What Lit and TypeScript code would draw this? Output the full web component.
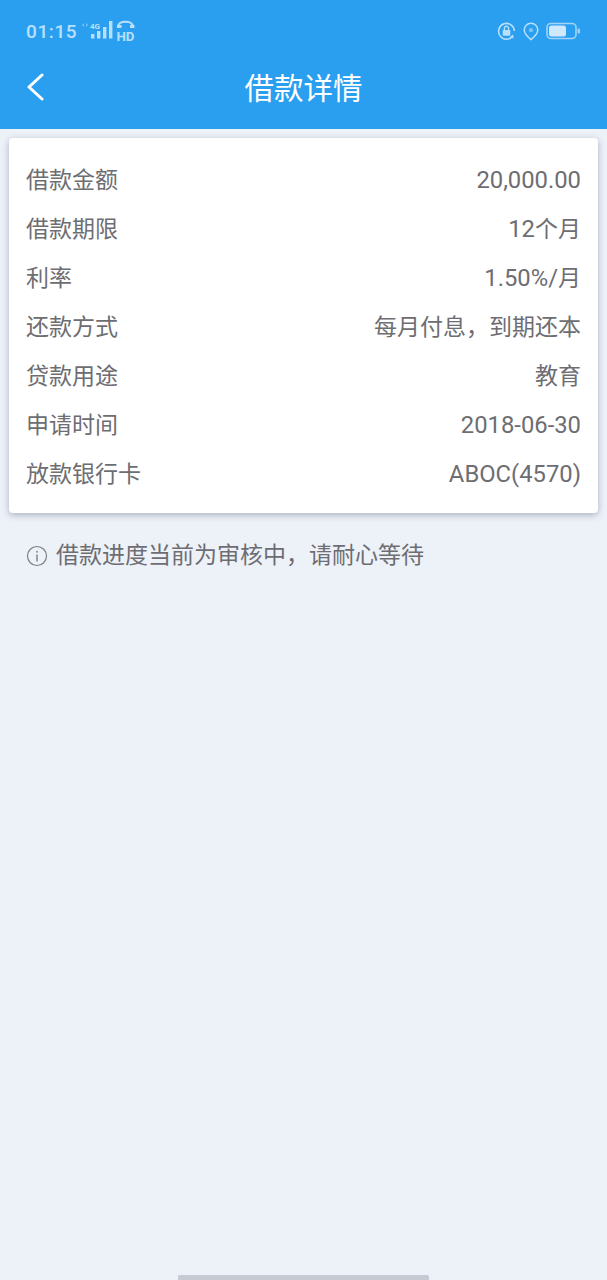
import { LitElement, html, css, svg } from "lit";
import { customElement } from "lit/decorators.js";

const ROWS: [string, string][] = [
  ["借款金额", "20,000.00"],
  ["借款期限", "12个月"],
  ["利率", "1.50%/月"],
  ["还款方式", "每月付息，到期还本"],
  ["贷款用途", "教育"],
  ["申请时间", "2018-06-30"],
  ["放款银行卡", "ABOC(4570)"],
];

@customElement("app-root")
export class AppRoot extends LitElement {
  static styles = css`
    :host {
      display: flex;
      flex-direction: column;
      width: 607px;
      height: 1280px;
      background: #edf2f9;
      font-family: Roboto, "Noto Sans CJK SC", sans-serif;
      color: #6d6d72;
      overflow: hidden;
    }
    .top {
      background: #2a9ff0;
      height: 129px;
      flex: none;
      display: flex;
      flex-direction: column;
      box-sizing: border-box;
    }
    .status {
      height: 62px;
      flex: none;
      display: flex;
      align-items: center;
      padding: 0 26px;
      color: #b9e0fb;
      justify-content: space-between;
    }
    .status-left, .status-right {
      display: flex;
      align-items: center;
    }
    .time {
      font-size: 19px;
      letter-spacing: 0.6px;
      font-weight: 500;
      margin-right: 3px;
    }
    .status-right { gap: 7px; }
    .nav {
      flex: 1;
      display: flex;
      align-items: center;
      justify-content: center;
      position: relative;
      padding-bottom: 12px;
    }
    .back {
      position: absolute;
      left: 26px;
      top: 11px;
    }
    .title {
      font-size: 29.5px;
      color: #fff;
      line-height: 1;
    }
    .body { flex: 1; display: flex; flex-direction: column; padding: 9px 9px 0; }
    .card {
      background: #fff;
      border-radius: 4px;
      box-shadow: 0 2px 7px rgba(90, 100, 120, 0.45);
      padding: 18px 17px 14px;
      display: flex;
      flex-direction: column;
    }
    .row {
      height: 49px;
      flex: none;
      display: flex;
      justify-content: space-between;
      align-items: center;
      font-size: 23px;
      line-height: 30px;
    }
    .num { font-size: 23.8px; }
    .note {
      display: flex;
      align-items: center;
      gap: 8px;
      padding: 28px 0 0 17px;
      font-size: 23px;
      line-height: 30px;
    }
    .spacer { flex: 1; }
    .home {
      width: 251px;
      height: 5px;
      border-radius: 2px 2px 0 0;
      background: #c5cad3;
      align-self: center;
      flex: none;
    }
    svg { display: block; }
  `;

  private value(v: string) {
    return v.split(/([\u4e00-\u9fff，]+)/).map((part) =>
      /[\u4e00-\u9fff，]/.test(part) ? part : html`<span class="num">${part}</span>`
    );
  }

  private statusLeft() {
    return html`<svg width="56" height="24" viewBox="0 0 56 24" fill="none">
      <path d="M2 6l2-2v4zM8 6L6 4v4z" fill="#7fc3f4"/>
      <text x="10" y="9.500" font-size="8" font-weight="700" font-family="Roboto, sans-serif" fill="#b9e0fb">4G</text>
      <rect x="11" y="15" width="3.400" height="4.500" fill="#b9e0fb"/>
      <rect x="17" y="12" width="3.400" height="7.500" fill="#b9e0fb"/>
      <rect x="23" y="8" width="3.400" height="11.500" fill="#b9e0fb"/>
      <rect x="29" y="2" width="3.400" height="17.500" fill="#b9e0fb"/>
      <path d="M38 7.500c0-6.500 15-6.500 15 0" stroke="#b9e0fb" stroke-width="2"/>
      <rect x="37" y="6" width="4.500" height="3" fill="#b9e0fb"/>
      <rect x="50" y="6" width="4.500" height="3" fill="#b9e0fb"/>
      <text x="36.500" y="21.500" font-size="13.500" font-weight="700" font-family="Roboto, sans-serif" fill="#b9e0fb" textLength="18" lengthAdjust="spacingAndGlyphs">HD</text>
    </svg>`;
  }

  private statusRight() {
    return html`
      <svg width="19" height="20" viewBox="0 0 20 20" fill="none">
        ${svg`<path d="M16.500 15.500A8.300 8.300 0 1 1 18.300 10" stroke="#b9e0fb" stroke-width="1.600"/>
        <path d="M13.500 16.200l4 1.600-.6-4" fill="#b9e0fb"/>
        <rect x="6" y="9" width="8" height="6" rx="1" fill="#b9e0fb"/>
        <path d="M7.800 9V7.200a2.200 2.200 0 0 1 4.400 0V9" stroke="#b9e0fb" stroke-width="1.400"/>`}
      </svg>
      <svg width="16" height="19" viewBox="0 0 17 20" fill="none">
        ${svg`<path d="M8.500 18.600C4.500 15.400 1.300 12.400 1.300 8.400a7.200 7.200 0 0 1 14.400 0c0 4-3.200 7-7.200 10.200z" stroke="#b9e0fb" stroke-width="1.600"/>
        <circle cx="8.500" cy="8.600" r="2.200" fill="#7fc3f4"/>`}
      </svg>
      <svg width="35" height="18" viewBox="0 0 35 18" fill="none">
        ${svg`<rect x="1" y="1.500" width="29" height="15" rx="4" stroke="#9fd3f8" stroke-width="1.600"/>
        <rect x="3" y="3.500" width="17" height="11" rx="2.500" fill="#cfe8fc"/>
        <rect x="31.500" y="6.500" width="2.500" height="5" rx="1" fill="#9fd3f8"/>`}
      </svg>
    `;
  }

  render() {
    return html`
      <div class="top">
        <div class="status">
          <div class="status-left">
            <span class="time">01:15</span>
            ${this.statusLeft()}
          </div>
          <div class="status-right">${this.statusRight()}</div>
        </div>
        <div class="nav">
          <svg class="back" width="18" height="28" viewBox="0 0 18 28" fill="none">
            <path d="M16 2L3 14l13 12" stroke="#fff" stroke-width="3" stroke-linecap="round" stroke-linejoin="round"/>
          </svg>
          <span class="title">借款详情</span>
        </div>
      </div>
      <div class="body">
        <div class="card">
          ${ROWS.map(([k, v]) => html`<div class="row"><span>${k}</span><span>${this.value(v)}</span></div>`)}
        </div>
        <div class="note">
          <svg width="22" height="22" viewBox="0 0 22 22" fill="none">
            <circle cx="11" cy="11" r="9.500" stroke="#7d7d83" stroke-width="1.200"/>
            <rect x="10.300" y="9.500" width="1.400" height="7" fill="#7d7d83"/>
            <rect x="10.300" y="5.800" width="1.400" height="1.800" fill="#7d7d83"/>
          </svg>
          <span>借款进度当前为审核中，请耐心等待</span>
        </div>
        <div class="spacer"></div>
        <div class="home"></div>
      </div>
    `;
  }
}
